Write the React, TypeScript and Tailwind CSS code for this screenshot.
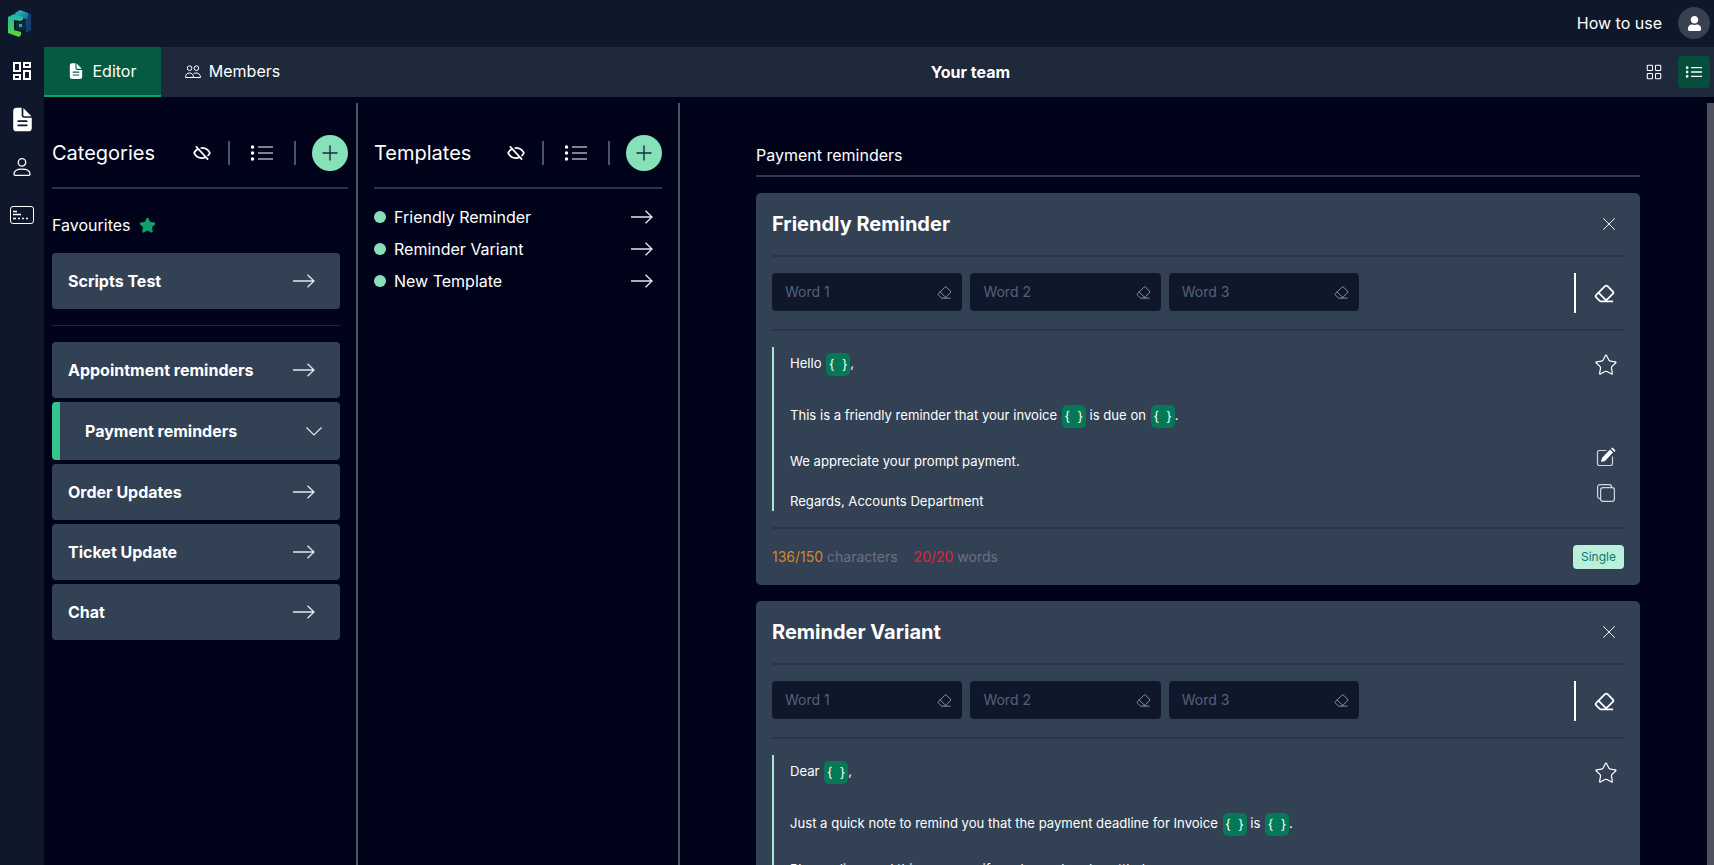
import type { ReactNode } from "react"
import { Eraser, LayoutGrid, Plus, Star, X } from "lucide-react"
import { FaUser } from "react-icons/fa"
import { IoDocumentText } from "react-icons/io5"
import { MdOutlineDashboard } from "react-icons/md"
import { PiEyeSlashBold } from "react-icons/pi"

const categories = ["Appointment reminders", "Payment reminders", "Order Updates", "Ticket Update", "Chat"]
const templates = ["Friendly Reminder", "Reminder Variant", "New Template"]

const Tag = () => (
  <span className="ml-px inline-block h-[23px] w-6 rounded-[5px] bg-[#047857] text-center align-middle leading-[23px] whitespace-pre">
    {"{  }"}
  </span>
)

const Arrow = () => (
  <svg viewBox="0 0 22 14" className="h-[14px] w-[22px] shrink-0 text-gray-200" fill="none" stroke="currentColor" strokeWidth="1.3">
    <path d="M0 7h21M14.5 .7 21 7l-6.500 6.300" />
  </svg>
)

const ListIcon = ({ className, width }: { className: string; width: number }) => (
  <svg viewBox="0 0 22 16" className={className} fill="currentColor" stroke="currentColor" strokeWidth={width}>
    <path d="M7 2h15M7 8h15M7 14h15" />
    <circle cx="1.500" cy="2" r="1.100" />
    <circle cx="1.500" cy="8" r="1.100" />
    <circle cx="1.500" cy="14" r="1.100" />
  </svg>
)

const Logo = () => (
  <svg viewBox="0 0 23 27" className="h-[27px] w-[23px]">
    <defs>
      <linearGradient id="lg" x1="0" y1="0" x2="0" y2="1">
        <stop offset="0" stopColor="#1fb5b0" />
        <stop offset="1" stopColor="#5fd932" />
      </linearGradient>
      <linearGradient id="lt" x1="0" y1="0" x2="1" y2="1">
        <stop offset="0" stopColor="#2cc4c8" />
        <stop offset="1" stopColor="#14699a" />
      </linearGradient>
    </defs>
    <path d="M12 0l11 4v16l-5 3-1-14-8-3z" fill="#123f6e" />
    <path d="M7 3l5-3 8 3v5l-3 1-9-3z" fill="url(#lt)" />
    <path d="M0 7l6-3 9 3v3l-3 1-6-1v10l7 2v3l-2 2-11-4z" fill="url(#lg)" />
    <path d="M8 12l5-1 4 1v7l-4 2-5-2z" fill="#0f2a3a" />
    <path d="M11 14h3v3h-3z" fill="#1fa9b5" />
  </svg>
)

const MembersIcon = () => (
  <svg viewBox="0 0 16 13" className="h-[13px] w-4" fill="none" stroke="currentColor" strokeWidth="1">
    <circle cx="4.600" cy="3.200" r="2.300" />
    <circle cx="11.400" cy="3.200" r="2.300" />
    <path d="M.5 12.500c0-3 1.600-4.500 4-4.500s4 1.500 4 4.500zM8.500 8.600c.7-.4 1.600-.6 2.600-.6 2.600 0 4.400 1.500 4.400 4.500h-7" />
  </svg>
)

const UserOutline = () => (
  <svg viewBox="0 0 18 18" className="h-[18px] w-[18px]" fill="none" stroke="currentColor" strokeWidth="1.3">
    <circle cx="9" cy="4.400" r="3.700" />
    <path d="M1 16.200c0-3 3-5 8-5s8 2 8 5c0 .7-.4 1.100-1.100 1.100H2.100c-.7 0-1.100-.4-1.100-1.100z" />
  </svg>
)

const EditIcon = () => (
  <svg viewBox="0 0 20 20" className="h-5 w-5">
    <path d="M16.500 9.500v7.300c0 1-.7 1.700-1.700 1.700H3.200c-1 0-1.700-.7-1.700-1.700V5.200c0-1 .7-1.700 1.700-1.700h7.300" fill="none" stroke="#d1d5db" strokeWidth="1.2" />
    <path d="M5 15l1-4 8-8.500 3 3-8 8.500zM15 1.500l1.500-1 3 3-1 1.500z" fill="#fff" />
  </svg>
)

const CopyIcon = () => (
  <svg viewBox="0 0 18 18" className="h-[18px] w-[18px] text-gray-300" fill="none" stroke="currentColor" strokeWidth="1.2">
    <rect x="3.600" y="3.600" width="13.800" height="13.800" rx="2.400" />
    <path d="M3.600 14.600h-.6a2.400 2.400 0 0 1-2.400-2.400V3A2.400 2.400 0 0 1 3 .6h9.200a2.400 2.400 0 0 1 2.400 2.400v.6" />
  </svg>
)

const Header = ({ title }: { title: string }) => (
  <div className="flex h-[70px] items-center justify-between border-b-2 border-[#293548]">
    <h2 className="text-xl text-white">{title}</h2>
    <div className="flex items-center">
      <PiEyeSlashBold size={18} className="text-white" />
      <span className="ml-[17px] h-6 w-0.5 bg-gray-600" />
      <ListIcon className="mx-[21px] h-4 w-[22px] text-white" width={1.2} />
      <span className="mr-4 h-6 w-0.5 bg-gray-600" />
      <span className="flex size-9 items-center justify-center rounded-full bg-[#86e0b8]">
        <Plus size={24} strokeWidth={1.4} className="text-[#1e293b]" />
      </span>
    </div>
  </div>
)

const CategoryRow = ({ name, active }: { name: string; active?: boolean }) => (
  <div className={`flex items-center justify-between overflow-hidden rounded-[4px] bg-[#334155] text-white ${active ? "h-[58px] border-l-[8px] border-[#34c48d] pl-[25px] pr-[18px]" : "h-14 pl-4 pr-[25px]"}`}>
    <span className="text-base font-bold">{name}</span>
    {active ? (
      <svg viewBox="0 0 16 9" className="h-[9px] w-4 text-gray-200" fill="none" stroke="currentColor" strokeWidth="1.2">
        <path d="M.5 .5 8 8l7.500-7.500" />
      </svg>
    ) : (
      <Arrow />
    )}
  </div>
)

const WordInput = ({ label }: { label: string }) => (
  <div className="flex h-[38px] w-[190.4px] items-center justify-between rounded-[4px] bg-[#0f172a] pl-[13px] pr-[10px]">
    <span className="text-sm text-[#55617a]">{label}</span>
    <Eraser size={15} strokeWidth={1.4} className="text-gray-400" />
  </div>
)

const Card = ({ title, children }: { title: string; children: ReactNode }) => (
  <div className="rounded-[5px] bg-[#334155] px-4 text-white">
    <div className="flex h-16 items-center justify-between border-b-2 border-[#293548]">
      <h3 className="text-xl font-bold">{title}</h3>
      <X size={22} strokeWidth={1} className="mr-1" />
    </div>
    <div className="flex h-[74px] gap-2 border-b-2 border-[#293548] pt-4">
      <WordInput label="Word 1" />
      <WordInput label="Word 2" />
      <WordInput label="Word 3" />
      <div className="ml-auto flex h-10 items-center">
        <span className="h-10 w-0.5 bg-white" />
        <Eraser size={21} strokeWidth={2} className="ml-[18px] mr-[9px]" />
      </div>
    </div>
    <div className="mt-4 flex">
      <div className="flex-1 border-l-2 border-[#a7e8cf] pl-4 text-[13.1px]">{children}</div>
      <div className="flex w-9 flex-col items-center justify-between pb-[9px] pt-1.5">
        <Star size={24} strokeWidth={1.2} />
        <div className="flex flex-col items-center gap-[17px]">
          <EditIcon />
          <CopyIcon />
        </div>
      </div>
    </div>
    <div className="mt-4 flex h-[58px] items-center justify-between border-t-2 border-[#293548] text-sm">
      <div className="flex gap-4 text-[#6b7280]">
        <span><span className="text-[#d48a1c]">136/150</span> characters</span>
        <span><span className="text-[#e02434]">20/20</span> words</span>
      </div>
      <span className="flex h-6 w-[51px] items-center justify-center rounded-[4px] bg-[#bbf0da] text-xs text-[#0f766e]">Single</span>
    </div>
  </div>
)

export default function App() {
  return (
    <div className="flex h-screen flex-col overflow-hidden bg-[#00031a] font-['Inter',sans-serif]">
      <div className="flex h-[47px] shrink-0 items-center justify-between bg-[#0f172a] pb-px pl-2 pr-1">
        <Logo />
        <div className="flex items-center gap-4 text-base text-white">
          How to use
          <span className="flex size-8 items-center justify-center rounded-full bg-[#374151]">
            <FaUser size={15} />
          </span>
        </div>
      </div>
      <div className="flex min-h-0 flex-1">
        <aside className="flex w-11 shrink-0 flex-col items-center bg-[#0f172a] text-white">
          <span className="flex h-12 items-center"><MdOutlineDashboard size={24} /></span>
          <span className="flex h-12 items-center"><IoDocumentText size={27} /></span>
          <span className="flex h-12 items-center"><UserOutline /></span>
          <span className="flex h-12 items-center">
            <svg viewBox="0 0 24 18" className="h-[18px] w-6" fill="none" stroke="currentColor" strokeWidth="1">
              <rect x="0.5" y="0.5" width="23" height="17" rx="2.500" />
              <path d="M3 5.500h4M3 8.500h8M3 12.500h3M8 12.500h2M12 12.500h2M16 12.500h2" strokeWidth="1.500" />
            </svg>
          </span>
        </aside>
        <div className="flex min-w-0 flex-1 flex-col">
          <div className="flex h-[50px] shrink-0 items-center bg-[#1e293b] text-white">
            <div className="flex h-full w-[117px] items-center justify-center gap-2 border-b-2 border-[#10a070] bg-[#055a42] pr-0.5">
              <IoDocumentText size={18} />
              Editor
            </div>
            <div className="flex h-full w-[143px] items-center justify-center gap-2 border-b-2 border-[#1e293b]">
              <MembersIcon />
              Members
            </div>
            <div className="flex-1 pr-2 text-center font-bold">Your team</div>
            <LayoutGrid size={18} strokeWidth={1.4} className="mr-[15px]" />
            <span className="mr-1 flex size-8 items-center justify-center rounded-[4px] bg-[#064e3b]">
              <ListIcon className="h-3 w-4" width={1.8} />
            </span>
          </div>
          <div className="flex min-h-0 flex-1 pt-1.5">
            <section className="flex w-[314px] shrink-0 flex-col border-r-2 border-[#4b5563] px-2 pt-4">
              <Header title="Categories" />
              <div className="mt-6 flex h-6 items-center gap-2 text-base text-white">
                Favourites <Star size={17} fill="#10a070" stroke="#10a070" />
              </div>
              <div className="mr-2 mt-4 flex flex-col">
                <CategoryRow name="Scripts Test" />
                <div className="my-4 h-px bg-[#1e293b]" />
                <div className="flex flex-col gap-1">
                  {categories.map((c) => <CategoryRow key={c} name={c} active={c === "Payment reminders"} />)}
                </div>
              </div>
            </section>
            <section className="flex w-[322px] shrink-0 flex-col border-r-2 border-[#4b5563] px-4 pt-4">
              <Header title="Templates" />
              <div className="mt-3 flex flex-col">
                {templates.map((t) => (
                  <div key={t} className="flex h-8 items-center text-base text-white">
                    <span className="mr-2 size-3 rounded-full bg-[#86e0b8]" />
                    <span className="flex-1">{t}</span>
                    <span className="mr-[9px]"><Arrow /></span>
                  </div>
                ))}
              </div>
            </section>
            <main className="min-w-0 flex-1 border-r-[7px] border-[#4f525d] pl-[76px] pr-[67px]">
              <div className="flex h-[74px] items-end border-b-2 border-[#2d3a4d] pb-2 text-base text-white">Payment reminders</div>
              <div className="mt-4 flex flex-col gap-4">
                <Card title="Friendly Reminder">
                  <div className="mt-1.5 h-[23px]">Hello <Tag />,</div>
                  <div className="mt-[29px] h-[23px]">This is a friendly reminder that your invoice <Tag /> is due on <Tag />.</div>
                  <div className="mt-[23px] h-5 leading-5">We appreciate your prompt payment.</div>
                  <div className="mt-5 h-5 leading-5">Regards, Accounts Department</div>
                </Card>
                <Card title="Reminder Variant">
                  <div className="mt-1.5 h-[23px]">Dear <Tag />,</div>
                  <div className="mt-[29px] h-[23px]">Just a quick note to remind you that the payment deadline for Invoice <Tag /> is <Tag />.</div>
                  <div className="mt-[23px] h-5 leading-5">Please disregard this message if you have already settled.</div>
                  <div className="mt-5 h-5 leading-5">Thank you for your business.</div>
                  <div className="mt-5 h-5 leading-5">Regards, Accounts Department</div>
                </Card>
              </div>
            </main>
          </div>
        </div>
      </div>
    </div>
  )
}
